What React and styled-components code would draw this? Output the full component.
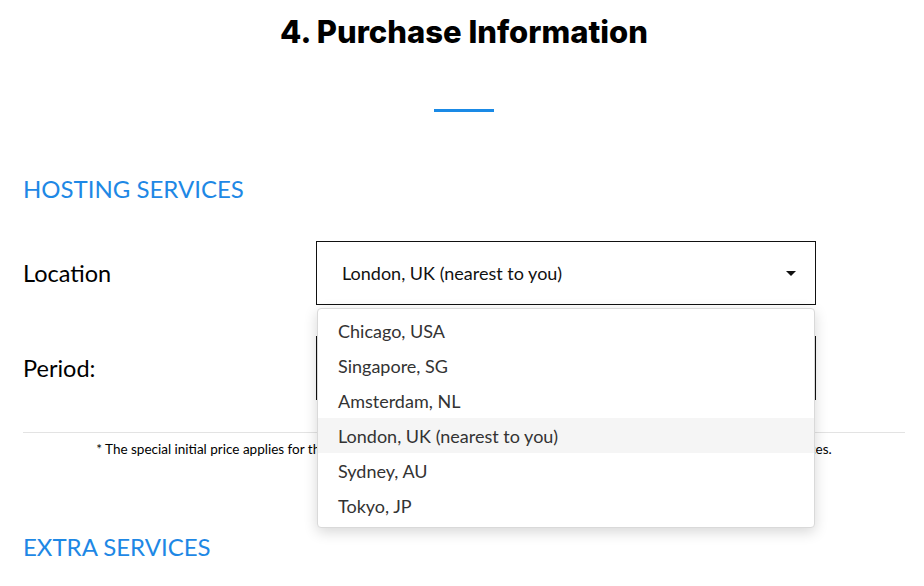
import React from "react";
import styled, { createGlobalStyle } from "styled-components";

const GlobalStyle = createGlobalStyle`
  html, body {
    margin: 0;
    padding: 0;
    background: #fff;
  }
  body {
    font-family: Lato, "Liberation Sans", sans-serif;
    color: #000;
    overflow: hidden;
  }
`;

const Page = styled.div`
  width: 924px;
  height: 586px;
  padding: 0 19px 0 23px;
  box-sizing: border-box;
`;

const Title = styled.h1`
  margin: 0;
  padding-top: 13px;
  text-align: center;
  font-family: Inter, "Open Sans", sans-serif;
  font-weight: 800;
  font-size: 31px;
  line-height: 38px;
  color: #000;
`;

const Accent = styled.div`
  width: 60px;
  height: 3px;
  margin: 58px auto 0;
  background: #1a8ae6;
`;

const SectionHeading = styled.h2`
  margin: ${(p) => p.$top}px 0 0;
  font-weight: 400;
  font-size: 24px;
  line-height: 30px;
  color: #1e88e5;
`;

const Form = styled.div`
  display: grid;
  grid-template-columns: 293px 500px;
  row-gap: 31px;
  margin-top: 37px;
`;

const Label = styled.div`
  display: flex;
  align-items: center;
  font-size: 23.5px;
  color: #000;
`;

const SelectWrap = styled.div`
  position: relative;
`;

const SelectBox = styled.div`
  height: 64px;
  box-sizing: border-box;
  border: 1px solid #111;
  display: flex;
  align-items: center;
  justify-content: space-between;
  padding: 0 19px 0 25px;
  font-size: 18px;
  color: #111;
`;

const Caret = styled.span`
  width: 0;
  height: 0;
  border-left: 5px solid transparent;
  border-right: 5px solid transparent;
  border-top: 5px solid #111;
  margin-top: 1px;
`;

const Menu = styled.ul`
  position: absolute;
  top: 67px;
  left: 1px;
  right: 1px;
  z-index: 5;
  margin: 0;
  padding: 4px 0 0;
  height: 220px;
  box-sizing: border-box;
  list-style: none;
  background: #fff;
  border: 1px solid #d9d9d9;
  border-radius: 4px;
  box-shadow: 0 4px 14px rgba(0, 0, 0, 0.16);
`;

const Option = styled.li`
  height: 35px;
  display: flex;
  align-items: center;
  padding-left: 20px;
  font-size: 18px;
  color: #333;
  background: ${(p) => (p.$active ? "#f5f5f5" : "transparent")};
`;

const Rule = styled.hr`
  margin: 32px 0 0;
  border: 0;
  border-top: 1px solid #e3e3e3;
`;

const Note = styled.p`
  margin: 8px 0 0;
  text-align: center;
  font-size: 13.5px;
  color: #000;
`;

const locations = [
  "Chicago, USA",
  "Singapore, SG",
  "Amsterdam, NL",
  "London, UK (nearest to you)",
  "Sydney, AU",
  "Tokyo, JP",
];

export default function App() {
  return (
    <Page>
      <GlobalStyle />
      <Title>4. Purchase Information</Title>
      <Accent />
      <SectionHeading $top={62}>HOSTING SERVICES</SectionHeading>
      <Form>
        <Label>Location</Label>
        <SelectWrap>
          <SelectBox>
            London, UK (nearest to you)
            <Caret />
          </SelectBox>
          <Menu>
            {locations.map((l) => (
              <Option key={l} $active={l.startsWith("London")}>
                {l}
              </Option>
            ))}
          </Menu>
        </SelectWrap>
        <Label>Period:</Label>
        <SelectWrap>
          <SelectBox>12 months</SelectBox>
        </SelectWrap>
      </Form>
      <Rule />
      <Note>
        * The special initial price applies for the first billing period of each new order only. Renewals are charged at our regular prices.
      </Note>
      <SectionHeading $top={75}>EXTRA SERVICES</SectionHeading>
    </Page>
  );
}
